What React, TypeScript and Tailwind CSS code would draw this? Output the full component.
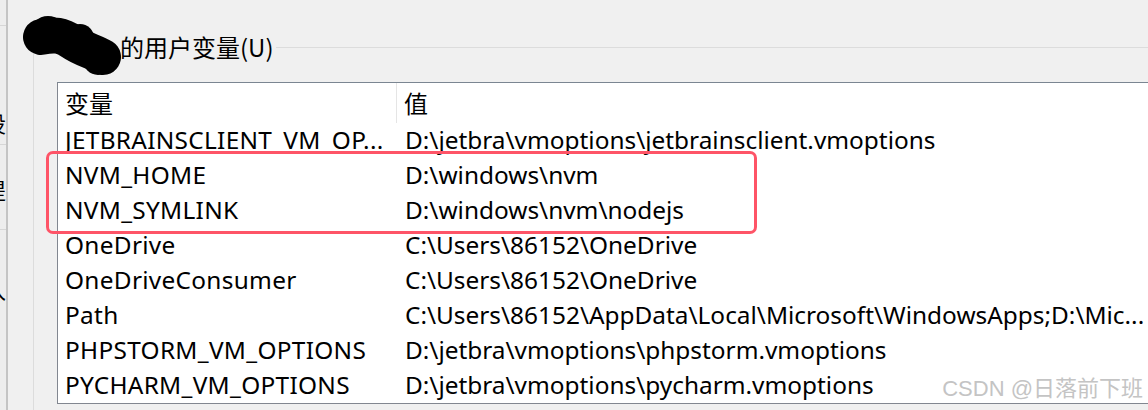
import React from "react";

const rows: [string, string][] = [
  ["JETBRAINSCLIENT_VM_OP...", "D:\\jetbra\\vmoptions\\jetbrainsclient.vmoptions"],
  ["NVM_HOME", "D:\\windows\\nvm"],
  ["NVM_SYMLINK", "D:\\windows\\nvm\\nodejs"],
  ["OneDrive", "C:\\Users\\86152\\OneDrive"],
  ["OneDriveConsumer", "C:\\Users\\86152\\OneDrive"],
  ["Path", "C:\\Users\\86152\\AppData\\Local\\Microsoft\\WindowsApps;D:\\Mic..."],
  ["PHPSTORM_VM_OPTIONS", "D:\\jetbra\\vmoptions\\phpstorm.vmoptions"],
  ["PYCHARM_VM_OPTIONS", "D:\\jetbra\\vmoptions\\pycharm.vmoptions"],
];

// scribble used to hide the user name
const Blob = () => (
  <svg className="absolute left-0 top-0" width="130" height="80" viewBox="0 0 130 80">
    <path
      d="M41 37 C55 34 62 35 72 42 S95 52 103 57"
      fill="none"
      stroke="#000"
      strokeWidth="36"
      strokeLinecap="round"
    />
    <g fill="#000">
      <circle cx="48" cy="34" r="18" />
      <circle cx="80" cy="38" r="14" />
      <circle cx="98" cy="60" r="15" />
    </g>
  </svg>
);

export default function App() {
  return (
    <div className="relative flex h-[410px] w-[1148px] overflow-hidden bg-[#f0f0f0] font-['Segoe_UI','Noto_Sans','Noto_Sans_CJK_SC',sans-serif] text-black">
      {/* edge of the window behind */}
      <div className="flex w-[8px] shrink-0 flex-col border-r-2 border-[#c4c4c4] bg-[#ededed] text-[22px]">
        <div className="h-[26px] border-b border-[#d6d6d6]" />
        <div className="flex h-[119px] items-end justify-end overflow-hidden border-b border-[#d6d6d6] pb-[4px]">
          <span className="whitespace-nowrap">设</span>
        </div>
        <div className="flex h-[85px] items-center justify-end overflow-hidden border-b border-[#d6d6d6] pt-[6px]">
          <span className="whitespace-nowrap">提</span>
        </div>
        <div className="flex h-[120px] items-center justify-end overflow-hidden">
          <span className="whitespace-nowrap">入</span>
        </div>
      </div>

      <div className="min-w-0 flex-1 pl-[25px]">
        <fieldset className="mt-[33px] h-[420px] min-w-0 border-l border-t border-[#dcdcdc]">
          <legend className="ml-[84px] px-[2px] text-[24px] leading-[28px] font-['Noto_Sans_CJK_SC','Noto_Sans',sans-serif]">
            的用户变量(U)
          </legend>
          <div className="ml-[23px] mt-[21px] h-[322px] w-[1120px] overflow-hidden border border-[#828790] border-t-[#7b8692] bg-white text-[24.4px]">
            <div className="flex h-[40px] items-center text-[24px]">
              <div className="flex h-full w-[339px] items-center border-r border-[#e5e5e5] pl-[7px] font-['Noto_Sans_CJK_SC',sans-serif]">
                变量
              </div>
              <div className="pl-[7px] font-['Noto_Sans_CJK_SC',sans-serif]">值</div>
            </div>
            {rows.map(([name, value]) => (
              <div key={name} className="flex h-[35px] items-center whitespace-nowrap">
                <div className="w-[340px] shrink-0 pl-[7px] tracking-[0.3px]">{name}</div>
                <div className="pl-[7px]">{value}</div>
              </div>
            ))}
          </div>
        </fieldset>
      </div>

      <Blob />

      {/* highlight */}
      <div className="absolute left-[46px] top-[151px] h-[83px] w-[711px] rounded-[7px] border-[3px] border-[#fe5467]" />

      <div className="absolute right-[5px] top-[372px] text-[22px] text-[#c4c4c4] font-['Liberation_Sans','Noto_Sans_CJK_SC',sans-serif]">
        CSDN @日落前下班
      </div>
    </div>
  );
}
